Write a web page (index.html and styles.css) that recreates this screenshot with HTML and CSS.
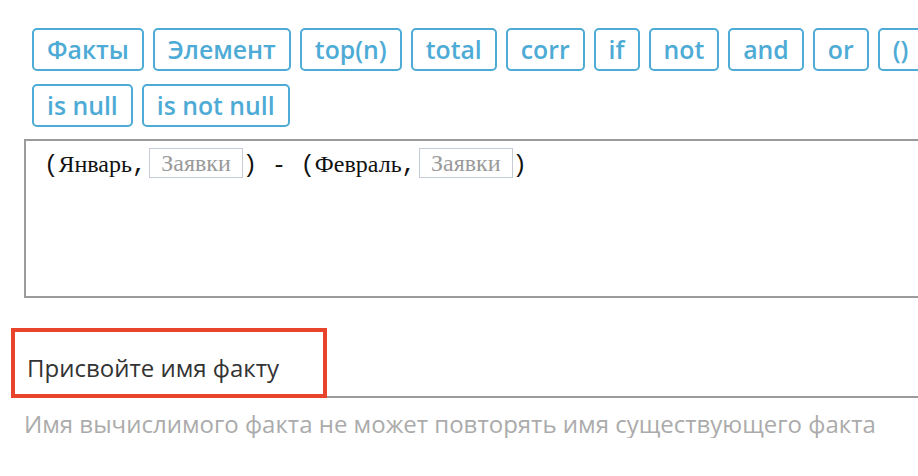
FILE: index.html
```html
<!DOCTYPE html>
<html lang="ru">
<head>
  <meta charset="UTF-8">
  <title>Вычислимый факт</title>
  <link rel="stylesheet" href="styles.css">
</head>
<body>
  <main class="editor">
    <div class="ops">
      <div class="ops-row">
        <button class="op">Факты</button>
        <button class="op">Элемент</button>
        <button class="op">top(n)</button>
        <button class="op">total</button>
        <button class="op">corr</button>
        <button class="op">if</button>
        <button class="op">not</button>
        <button class="op">and</button>
        <button class="op">or</button>
        <button class="op">()</button>
      </div>
      <div class="ops-row">
        <button class="op">is null</button>
        <button class="op">is not null</button>
      </div>
    </div>

    <div class="formula"><span class="sym">(</span><span class="name">Январь</span><span class="sym">,</span><span class="token">Заявки</span><span class="sym">) - (</span><span class="name">Февраль</span><span class="sym">,</span><span class="token">Заявки</span><span class="sym">)</span></div>

    <div class="fact-name">
      <div class="field">Присвойте имя факту</div>
      <div class="highlight"></div>
    </div>
    <p class="hint">Имя вычислимого факта не может повторять имя существующего факта</p>
  </main>
</body>
</html>
```

FILE: styles.css
```css
/* Page */
body {
  margin: 0;
  font-family: "Open Sans", "Noto Sans", sans-serif;
  background: #ffffff;
  color: #333;
  overflow: hidden;
}

/* Operator buttons */
.ops {
  display: flex;
  flex-direction: column;
  gap: 13px;
  padding: 28px 0 0 32px;
}
.ops-row {
  display: flex;
  gap: 9px;
  white-space: nowrap;
}
.op {
  height: 43px;
  padding: 0 13px;
  border: 2px solid #4eabd5;
  border-radius: 5px;
  background: #fff;
  color: #4eabd5;
  font-family: "Open Sans", sans-serif;
  font-weight: 600;
  font-size: 24.8px;
  line-height: 39px;
  cursor: pointer;
}

/* Formula area */
.formula {
  box-sizing: border-box;
  width: 920px;
  height: 159px;
  margin: 12px 0 0 24px;
  padding: 7px 0 0 18px;
  border: 2px solid #9b9b9b;
  font-size: 24px;
  line-height: 30px;
  color: #111;
  white-space: nowrap;
}
.sym {
  font-family: "Liberation Mono", monospace;
  white-space: pre;
}
.name {
  font-family: "Liberation Serif", serif;
}
.token {
  display: inline-block;
  box-sizing: border-box;
  height: 30px;
  margin: 0 0 0 3px;
  padding: 0 11px;
  border: 1px solid #c6cbd8;
  font-family: "Liberation Serif", serif;
  line-height: 28px;
  color: #9a9a9a;
  vertical-align: top;
}

/* Fact name field */
.fact-name {
  position: relative;
  margin: 32px 0 0 24px;
}
.field {
  box-sizing: border-box;
  height: 68px;
  padding: 23px 0 0 3px;
  border-bottom: 2px solid #9b9b9b;
  font-size: 24px;
  line-height: 30px;
  color: #333;
}
.highlight {
  position: absolute;
  left: -13px;
  top: -2px;
  width: 316px;
  height: 70px;
  box-sizing: border-box;
  border: 4px solid #e8432b;
}
.hint {
  margin: 0 0 0 24px;
  padding-top: 12px;
  font-size: 24px;
  line-height: 28px;
  color: #ababab;
}
```
